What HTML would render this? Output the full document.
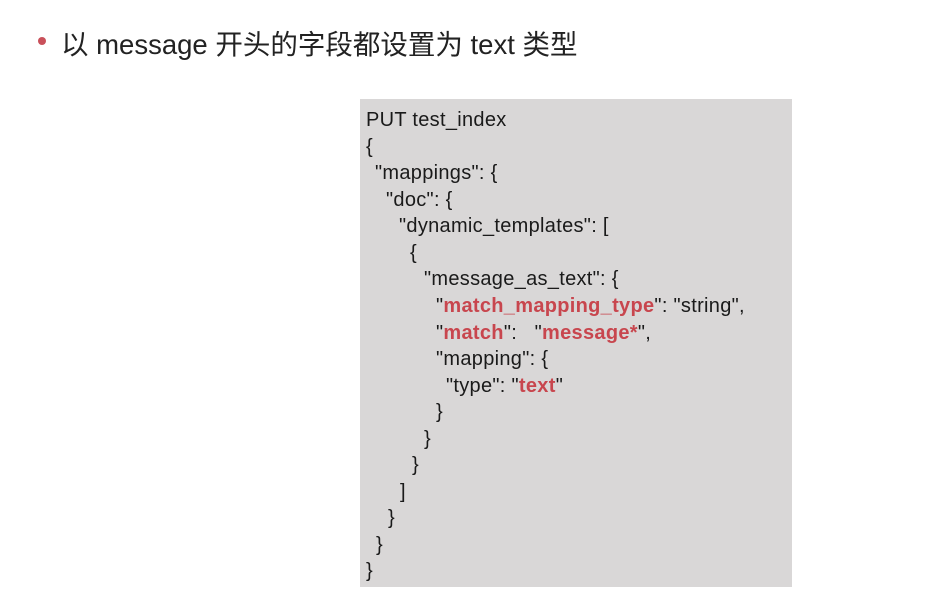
<!DOCTYPE html>
<html><head><meta charset="utf-8"><style>
body{margin:0;width:934px;height:603px;background:#fff;position:relative;overflow:hidden;font-family:"Liberation Sans","Noto Sans CJK SC",sans-serif;}
.t{position:absolute;left:61px;top:22px;font-size:27.5px;color:#222;white-space:nowrap;}
.b{position:absolute;left:38px;top:37px;width:8px;height:8px;border-radius:50%;background:#c9505a;}
.box{position:absolute;left:360px;top:99px;width:432px;height:488px;background:#d9d7d7;}
.l{position:absolute;font-size:20px;letter-spacing:0.3px;color:#1a1a1a;white-space:nowrap;line-height:22px;margin-top:2px;}
.r{color:#c8464e;font-weight:bold;}
</style></head><body>
<div class="b"></div>
<div class="t">以 message 开头的字段都设置为 text 类型</div>
<div class="box"></div>
<div class="l" style="left:366px;top:107px">PUT test_index</div>
<div class="l" style="left:366px;top:134px">{</div>
<div class="l" style="left:375px;top:160px">"mappings": {</div>
<div class="l" style="left:386px;top:187px">"doc": {</div>
<div class="l" style="left:399px;top:213px">"dynamic_templates": [</div>
<div class="l" style="left:410px;top:240px">{</div>
<div class="l" style="left:424px;top:266px">"message_as_text": {</div>
<div class="l" style="left:436px;top:293px">"<span class="r">match_mapping_type</span>": "string",</div>
<div class="l" style="left:436px;top:320px">"<span class="r">match</span>": &nbsp;&nbsp;"<span class="r">message*</span>",</div>
<div class="l" style="left:436px;top:346px">"mapping": {</div>
<div class="l" style="left:446px;top:373px">"type": "<span class="r">text</span>"</div>
<div class="l" style="left:436px;top:399px">}</div>
<div class="l" style="left:424px;top:426px">}</div>
<div class="l" style="left:412px;top:452px">}</div>
<div class="l" style="left:400px;top:479px">]</div>
<div class="l" style="left:388px;top:505px">}</div>
<div class="l" style="left:376px;top:532px">}</div>
<div class="l" style="left:366px;top:558px">}</div>
</body></html>
